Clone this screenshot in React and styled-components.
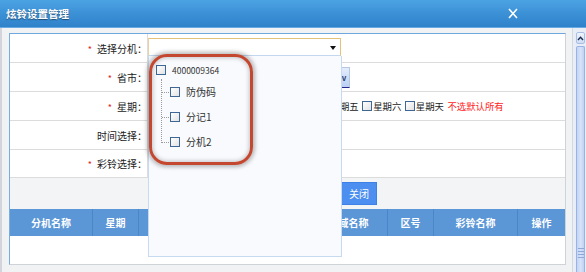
import React from 'react';
import styled, { createGlobalStyle } from 'styled-components';

const GlobalStyle = createGlobalStyle`
  html, body { margin: 0; padding: 0; background: #eef0f3; }
  body {
    font-family: "Noto Sans CJK SC", "Noto Sans", sans-serif;
    font-size: 10px;
    color: #333;
  }
  * { box-sizing: border-box; }
`;

const Dialog = styled.div`
  width: 586px;
  height: 272px;
  display: flex;
  flex-direction: column;
  overflow: hidden;
  background: #f1f2f4;
`;

const TitleBar = styled.div`
  height: 28px;
  flex: none;
  display: flex;
  align-items: center;
  justify-content: space-between;
  padding: 0 68px 0 6px;
  background: linear-gradient(#4ca3e3, #3a8fd5 55%, #2f82ca);
  border-bottom: 1px solid #66abe4;
`;

const Title = styled.div`
  color: #fff;
  font-weight: bold;
  font-size: 10.5px;
  text-shadow: 0 1px 1px rgba(0, 0, 0, 0.45);
`;

const Close = styled.svg`
  width: 10px;
  height: 11px;
  display: block;
`;

const Main = styled.div`
  flex: 1;
  display: flex;
  min-height: 0;
  border-left: 2px solid #d2d6dc;
`;

const Content = styled.div`
  flex: 1;
  padding: 5px 6px 0 7px;
  min-width: 0;
`;

const Form = styled.div`
  position: relative;
  background: #fff;
  border: 1px solid #cfd2d6;
  border-top-color: #6fa8df;
  border-left-color: #79addf;
`;

const FormRow = styled.div`
  display: grid;
  grid-template-columns: 138px 1fr;
  height: ${(p) => p.$h}px;
  border-bottom: 1px solid #dcdcdc;
`;

const Label = styled.div`
  display: flex;
  align-items: center;
  justify-content: flex-end;
  border-right: 1px solid #dcdcdc;
  color: #222;
  font-size: 10px;
`;

const Star = styled.span`
  color: #e2231a;
  font-size: 9px;
  margin-right: 5px;
  position: relative;
  top: 1px;
`;

const Field = styled.div`
  position: relative;
  display: flex;
  align-items: ${(p) => (p.$top ? 'flex-start' : 'center')};
  padding-top: ${(p) => (p.$top ? '4px' : '0')};
  padding-left: ${(p) => p.$pl || 0}px;
`;

const SelectWrap = styled.div`
  position: relative;
  width: 194px;
  z-index: 5;
`;

const SelectBox = styled.div`
  height: 18px;
  width: 193px;
  border: 1px solid #e5c27a;
  border-left-color: #e9d3a0;
  border-bottom-color: #c4d7ef;
  background: #fff;
  position: relative;
  &::after {
    content: '';
    position: absolute;
    right: 4px;
    top: 7px;
    border-left: 3px solid transparent;
    border-right: 3px solid transparent;
    border-top: 4px solid #111;
  }
`;

const Panel = styled.div`
  position: absolute;
  top: 18px;
  left: 0;
  width: 194px;
  height: 201px;
  background: #f8fafd;
  border: 1px solid #c7daef;
  border-top: none;
  padding: 5px 0 0 7px;
`;

const Annotation = styled.div`
  position: absolute;
  left: 1px;
  top: 16px;
  width: 104px;
  height: 111px;
  border: 3px solid #c4472f;
  border-radius: 18px;
  box-shadow: 0 0 4px 2px rgba(0, 0, 0, 0.28), inset 0 0 4px 1px rgba(0, 0, 0, 0.22);
  pointer-events: none;
  z-index: 6;
`;

const TreeRoot = styled.div`
  display: flex;
  align-items: center;
  height: 18px;
  gap: 6px;
  font-size: 8.5px;
  color: #333;
`;

const TreeChildren = styled.div`
  margin-left: 5px;
  padding-left: 8px;
  border-left: 1px dotted #9a9a9a;
  height: 64px;
`;

const TreeItem = styled.div`
  position: relative;
  display: flex;
  align-items: center;
  gap: 6px;
  height: 25px;
  font-size: 10px;
  color: #333;
  &::before {
    content: '';
    position: absolute;
    left: -8px;
    top: 50%;
    width: 7px;
    border-top: 1px dotted #9a9a9a;
  }
`;

const Check = styled.span`
  display: inline-block;
  flex: none;
  width: 10px;
  height: 10px;
  border: 1px solid #3f6796;
  background: linear-gradient(135deg, #ffffff, #e2e2e2);
`;

const ProvSelect = styled.div`
  width: 200px;
  height: 21px;
  margin-left: 2px;
  display: flex;
  justify-content: flex-end;
  border: 1px solid #b7c8de;
  border-bottom: 1px solid #27288a;
  background: #fff;
`;

const ProvBtn = styled.div`
  width: 10px;
  display: flex;
  align-items: center;
  justify-content: center;
  background: linear-gradient(#e4edfc, #b9cff4);
  color: #2b3f6e;
  font-size: 8px;
  font-weight: bold;
`;

const Weekdays = styled.div`
  display: flex;
  align-items: center;
  gap: 3.5px;
  font-size: 9.4px;
  color: #222;
`;

const Day = styled.label`
  display: flex;
  align-items: center;
  gap: 1px;
`;

const Hint = styled.span`
  color: #ff1a1a;
`;

const ButtonBar = styled.div`
  height: 31px;
  background: #f3f4f6;
  display: flex;
  align-items: flex-start;
  gap: 6px;
  padding: 4px 0 0 289px;
`;

const Button = styled.button`
  width: 36px;
  height: 23px;
  padding: 0;
  border: 1px solid #3d80e6;
  background: #4c8ff0;
  color: #fff;
  font-family: inherit;
  font-size: 10px;
`;

const HeadRow = styled.div`
  display: grid;
  grid-template-columns: 83px 46px 86px 85px 78px 46px 84px 47px;
  height: 27px;
  background: #5b96d6;
`;

const HeadCell = styled.div`
  display: flex;
  align-items: center;
  justify-content: center;
  color: #fff;
  font-weight: bold;
  font-size: 10px;
  border-right: 1px solid #4b86c8;
  &:last-child { border-right: none; }
`;

const BodyRow = styled.div`
  height: 28px;
  background: #fff;
`;

const Scrollbar = styled.div`
  width: 14px;
  flex: none;
  display: flex;
  flex-direction: column;
  gap: 2px;
  padding: 4px 1px 0 3px;
  background: #e9eef6;
  border-left: 1px solid #d3d9e3;
`;

const UpBtn = styled.div`
  height: 12px;
  border: 1px solid #a9bfe5;
  border-radius: 2px;
  background: linear-gradient(#f0f5fd, #cfdcf5);
  display: flex;
  align-items: center;
  justify-content: center;
`;

const Thumb = styled.div`
  flex: 1;
  border: 1px solid #98b2e4;
  border-bottom: none;
  border-radius: 2px 2px 0 0;
  background: linear-gradient(90deg, #c3d4f5, #d6e2f9 50%, #bfd1f3);
  display: flex;
  flex-direction: column;
  align-items: center;
  justify-content: flex-end;
  padding-bottom: 14px;
  gap: 2px;
`;

const Grip = styled.span`
  width: 6px;
  height: 1px;
  background: #8ea8d8;
`;

const weekdays = ['星期一', '星期二', '星期三', '星期四', '星期五', '星期六', '星期天'];
const columns = ['分机名称', '星期', '开始时间', '结束时间', '区域名称', '区号', '彩铃名称', '操作'];

export default function App() {
  return (
    <>
      <GlobalStyle />
      <Dialog>
        <TitleBar>
          <Title>炫铃设置管理</Title>
          <Close viewBox="0 0 10 11">
            <path d="M1 1 L9 10 M9 1 L1 10" stroke="#fff" strokeWidth="1.6" fill="none" />
          </Close>
        </TitleBar>
        <Main>
          <Content>
            <Form>
              <FormRow $h={29}>
                <Label><Star>*</Star>选择分机：</Label>
                <Field $top>
                  <SelectWrap>
                    <SelectBox />
                    <Panel>
                      <TreeRoot><Check />4000009364</TreeRoot>
                      <TreeChildren>
                        <TreeItem><Check />防伪码</TreeItem>
                        <TreeItem><Check />分记1</TreeItem>
                        <TreeItem><Check />分机2</TreeItem>
                      </TreeChildren>
                    </Panel>
                    <Annotation />
                  </SelectWrap>
                </Field>
              </FormRow>
              <FormRow $h={29}>
                <Label><Star>*</Star>省市：</Label>
                <Field>
                  <ProvSelect><ProvBtn>v</ProvBtn></ProvSelect>
                </Field>
              </FormRow>
              <FormRow $h={29}>
                <Label><Star>*</Star>星期：</Label>
                <Field $pl={1}>
                  <Weekdays>
                    {weekdays.map((d) => (
                      <Day key={d}><Check />{d}</Day>
                    ))}
                    <Hint>不选默认所有</Hint>
                  </Weekdays>
                </Field>
              </FormRow>
              <FormRow $h={29}>
                <Label>时间选择：</Label>
                <Field />
              </FormRow>
              <FormRow $h={28}>
                <Label><Star>*</Star>彩铃选择：</Label>
                <Field />
              </FormRow>
              <ButtonBar>
                <Button>保存</Button>
                <Button>关闭</Button>
              </ButtonBar>
              <HeadRow>
                {columns.map((c) => (
                  <HeadCell key={c}>{c}</HeadCell>
                ))}
              </HeadRow>
              <BodyRow />
            </Form>
          </Content>
          <Scrollbar>
            <UpBtn>
              <svg width="7" height="5" viewBox="0 0 7 5">
                <path d="M1 4 L3.5 1.2 L6 4" stroke="#1f2d4d" strokeWidth="1.4" fill="none" />
              </svg>
            </UpBtn>
            <Thumb>
              <Grip /><Grip /><Grip /><Grip />
            </Thumb>
          </Scrollbar>
        </Main>
      </Dialog>
    </>
  );
}
